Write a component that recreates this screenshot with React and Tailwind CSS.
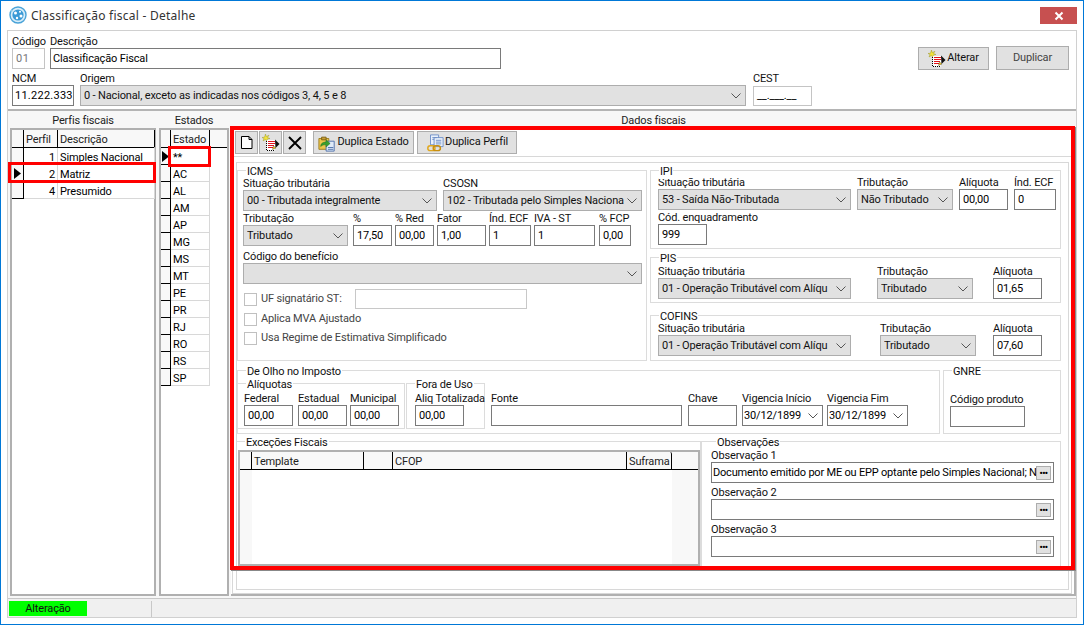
import React from 'react';

const PERFIS = [['1', 'Simples Nacional'], ['2', 'Matriz'], ['4', 'Presumido']];
const ESTADOS = ['**', 'AC', 'AL', 'AM', 'AP', 'MG', 'MS', 'MT', 'PE', 'PR', 'RJ', 'RO', 'RS', 'SP'];

function AppIcon() {
  return (
    <svg width="18" height="18" viewBox="0 0 18 18">
      <circle cx="9" cy="9" r="8" fill="#d9eefa" stroke="#4aa3d8" strokeWidth="1.4" />
      <circle cx="9" cy="9" r="5.6" fill="#3b9ad6" />
      <circle cx="6.5" cy="7" r="1.5" fill="#fff" />
      <circle cx="11" cy="5.8" r="1" fill="#fff" />
      <circle cx="12" cy="10" r="1.5" fill="#fff" />
      <circle cx="8" cy="12" r="1.2" fill="#fff" />
      <circle cx="2.5" cy="5" r="1" fill="#8fcbe9" />
    </svg>
  );
}

function NewIcon() {
  return (
    <svg width="14" height="15" viewBox="0 0 14 15">
      <path d="M1.500 1.500h7.500l3 3v9h-10.500z" fill="#fff" stroke="#000" />
      <path d="M9 1.500v3h3" fill="none" stroke="#000" />
    </svg>
  );
}

function EditIcon() {
  return (
    <svg width="18" height="18" viewBox="0 0 18 18">
      <path d="M3.500 0l.8 2.500L7 1.200 5.500 3.500 8 4.500l-2.700.5L5 7.500 3.500 5.500 1 7l1-2.500L0 3.500l2.500-.3z" fill="#f2e33c" stroke="#8f8a1c" strokeWidth=".4" />
      <path d="M5 6h8v10.500H4.500" fill="#fff" />
      <path d="M4.500 7v9.500h8" fill="none" stroke="#000" strokeDasharray="1 1" />
      <path d="M6 7.500h7M6 9.500h7M6 11.500h6M6 13.500h5" stroke="#e0141c" strokeWidth="1.200" />
      <path d="M13 5.500l4.500 4.500-4 4z" fill="#111" />
      <path d="M10.500 15.500l1-3.500 2.500 2z" fill="#f5d020" stroke="#333" strokeWidth=".4" />
    </svg>
  );
}

function DeleteIcon() {
  return (
    <svg width="16" height="16" viewBox="0 0 16 16">
      <path d="M2 2l12 12M14 2L2 14" stroke="#000" strokeWidth="1.900" fill="none" />
    </svg>
  );
}

function DupEstadoIcon() {
  return (
    <svg width="18" height="18" viewBox="0 0 20 20">
      <path d="M1 5h11v12H1z" fill="#eec64a" stroke="#9a7a1c" />
      <path d="M4 3.500h5v3H4z" fill="#c9a035" stroke="#7a5f14" />
      <path d="M9 8h9v11H9z" fill="#dfeaf8" stroke="#4a6da8" />
      <path d="M11 15h6M11 17h6" stroke="#4a6da8" />
      <path d="M3 14c0-4 3-5 6-5V6.500l4.500 4-4.500 4V12c-3 0-4 0-6 2z" fill="#3aa02e" stroke="#1e6a18" strokeWidth=".5" />
    </svg>
  );
}

function DupPerfilIcon() {
  return (
    <svg width="18" height="18" viewBox="0 0 20 20">
      <path d="M5 1h9v11H5z" fill="#eaf1fb" stroke="#6b8cc6" />
      <path d="M9 4h10v10H9z" fill="#eaf1fb" stroke="#6b8cc6" />
      <path d="M7 4h5M7 6h2M11 7h6M11 9h6M11 11h6" stroke="#6b8cc6" />
      <rect x="2" y="13" width="8" height="5.500" rx="2.700" fill="none" stroke="#e0a820" strokeWidth="1.600" />
      <rect x="8" y="13" width="8" height="5.500" rx="2.700" fill="none" stroke="#c98f10" strokeWidth="1.600" />
    </svg>
  );
}

function Chevron() {
  return (
    <svg width="10" height="6" viewBox="0 0 10 6" className="shrink-0 mr-[4px] ml-[3px]">
      <path d="M.5.500L5 5l4.500-4.500" fill="none" stroke="#555" />
    </svg>
  );
}

function Arrow({ className }) {
  return (
    <svg width="7" height="11" viewBox="0 0 7 11" className={className}>
      <path d="M0 0l7 5.500L0 11z" fill="#000" />
    </svg>
  );
}

function Label({ children, className = '' }) {
  return <div className={`h-[14px] leading-[15px] whitespace-nowrap text-[#111] ${className}`}>{children}</div>;
}

function Input({ className = '', children }) {
  return (
    <div className={`h-[21px] border border-[#7a7a7a] bg-white pl-[3px] leading-[20px] overflow-hidden whitespace-nowrap text-black ${className}`}>
      {children}
    </div>
  );
}

function Select({ className = '', children }) {
  return (
    <div className={`h-[21px] border border-[#adadad] bg-[#e1e1e1] pl-[3px] flex items-center text-[#111] ${className}`}>
      <span className="flex-1 min-w-0 overflow-hidden whitespace-nowrap leading-[20px]">{children}</span>
      <Chevron />
    </div>
  );
}

function Field({ label, className = '', children }) {
  return (
    <div className={`shrink-0 ${className}`}>
      <Label>{label}</Label>
      {children}
    </div>
  );
}

function Group({ title, className = '', legendClass = 'left-[8px]', children }) {
  return (
    <div className={`relative border border-[#dcdcdc] shrink-0 ${className}`}>
      <div className={`absolute -top-[6px] bg-white px-[1px] h-[14px] leading-[14px] whitespace-nowrap text-[#111] ${legendClass}`}>{title}</div>
      {children}
    </div>
  );
}

function ToolBtn({ className = '', children }) {
  return (
    <div className={`border border-[#adadad] bg-[#e1e1e1] flex items-center justify-center gap-[1px] shrink-0 ${className}`}>
      {children}
    </div>
  );
}

function GridHead({ className = '', children }) {
  return <div className={`h-full border-r border-black pl-[2px] leading-[19px] whitespace-nowrap overflow-hidden text-[#222] shrink-0 ${className}`}>{children}</div>;
}

function ObsRow({ label, className = '', children }) {
  return (
    <div className={className}>
      <Label>{label}</Label>
      <div className="h-[21px] border border-[#7a7a7a] bg-white pl-[1px] flex items-center">
        <span className="flex-1 min-w-0 overflow-hidden whitespace-nowrap text-black leading-[20px] tracking-[-0.2px]">{children}</span>
        <div className="w-[15px] h-[14px] mr-[2px] border border-[#adadad] bg-[#e1e1e1] flex items-center justify-center shrink-0 font-bold leading-[8px] text-[9px] tracking-[-0.5px] text-black">
          •••
        </div>
      </div>
    </div>
  );
}

function DateBox() {
  return (
    <div className="w-[81px] h-[21px] border border-[#7a7a7a] bg-white pl-[1px] flex items-center text-black">
      <span className="flex-1 leading-[20px]">30/12/1899</span><Chevron />
    </div>
  );
}

export default function App() {
  return (
    <div className="relative w-[1084px] h-[625px] border border-[#0078d7] bg-white flex flex-col overflow-hidden text-[11px] tracking-[-0.15px] [font-family:Roboto,sans-serif]">
      {/* Title bar */}
      <div className="h-[29px] shrink-0 flex items-start pl-[8px] pr-[6px] bg-white">
        <div className="mt-[5px]"><AppIcon /></div>
        <div className="ml-[4px] mt-[6px] text-[12px] tracking-[0.25px] leading-[17px] text-[#333] [font-family:'Noto_Sans',sans-serif]">Classificação fiscal - Detalhe</div>
        <div className="ml-auto mt-[6px] w-[37px] h-[17px] bg-[#c75050] flex items-center justify-center">
          <svg width="10" height="10" viewBox="0 0 10 10">
            <path d="M1.500 1.500l7 7M8.500 1.500l-7 7" stroke="#fff" strokeWidth="2" />
          </svg>
        </div>
      </div>

      {/* Client */}
      <div className="flex-1 min-h-0 mx-[6px] mb-[6px] border border-[#d0d0d0] bg-[#f0f0f0] flex flex-col">
        {/* Header form */}
        <div className="h-[80px] shrink-0 bg-white border-b-2 border-[#b4b4b4] pl-[4px] pt-[3px]">
          <div className="flex items-start h-[37px]">
            <Field label="Código" className="w-[33px]">
              <div className="h-[21px] border border-[#c4c4c4] bg-white pl-[3px] leading-[20px] text-[#777] tracking-[.5px]">01</div>
            </Field>
            <Field label="Descrição" className="ml-[5px]">
              <Input className="w-[451px]"><span className="-ml-[1px]">Classificação Fiscal</span></Input>
            </Field>
            <ToolBtn className="ml-[417px] mt-[13px] w-[71px] h-[23px] text-[#111]"><EditIcon /> Alterar</ToolBtn>
            <ToolBtn className="ml-[7px] mt-[12px] w-[73px] h-[24px] text-[#444]">Duplicar</ToolBtn>
          </div>
          <div className="flex items-start">
            <Field label="NCM">
              <Input className="w-[62px]"><span className="-ml-[1px] tracking-[.25px]">11.222.333</span></Input>
            </Field>
            <Field label="Origem" className="ml-[6px]">
              <Select className="w-[666px]">0 - Nacional, exceto as indicadas nos códigos 3, 4, 5 e 8</Select>
            </Field>
            <Field label="CEST" className="ml-[7px]">
              <div className="w-[59px] h-[20px] mt-[1px] border border-[#c4c4c4] bg-white pl-[3px] leading-[18px] text-black">__.___.__</div>
            </Field>
          </div>
        </div>

        {/* Main */}
        <div className="flex-1 min-h-0 flex pl-[2px] pb-[2px] bg-[#f7f7f7]">
          {/* Perfis */}
          <div className="w-[146px] shrink-0 flex flex-col">
            <div className="h-[17px] leading-[19px] text-center text-[#222] shrink-0">Perfis fiscais</div>
            <div className="flex-1 min-h-0 border-2 border-[#b0b0b0] bg-white">
              <div className="h-[18px] flex border-b border-black bg-[#f8f8f8]">
                <GridHead className="w-[12px]" />
                <GridHead className="w-[34px]">Perfil</GridHead>
                <GridHead className="w-[97px]">Descrição</GridHead>
              </div>
              {PERFIS.map(([n, d], i) => (
                <div key={n} className="h-[17px] flex leading-[19px] text-black">
                  <div className="w-[12px] shrink-0 bg-[#f8f8f8] border-r border-b border-black flex items-center justify-center">
                    {i === 1 && <Arrow />}
                  </div>
                  <div className="w-[34px] shrink-0 border-r border-b border-[#d8d8d8] text-right pr-[2px]">{n}</div>
                  <div className="w-[97px] shrink-0 border-r border-b border-[#d8d8d8] pl-[2px]">{d}</div>
                </div>
              ))}
            </div>
          </div>

          {/* Estados */}
          <div className="w-[70px] shrink-0 ml-[3px] flex flex-col">
            <div className="h-[17px] leading-[19px] text-center text-[#222] shrink-0">Estados</div>
            <div className="flex-1 min-h-0 border-2 border-[#b0b0b0] bg-white">
              <div className="h-[18px] flex border-b border-black bg-[#f8f8f8]">
                <GridHead className="w-[10px]" />
                <GridHead className="w-[39px]">Estado</GridHead>
              </div>
              {ESTADOS.map((uf, i) => (
                <div key={uf} className="h-[17px] flex leading-[19px] text-black">
                  <div className="w-[10px] shrink-0 bg-[#f8f8f8] border-r border-b border-black flex items-center justify-center">
                    {i === 0 && <Arrow />}
                  </div>
                  <div className="w-[39px] shrink-0 border-r border-b border-[#d8d8d8] pl-[2px]">{uf}</div>
                </div>
              ))}
            </div>
          </div>

          {/* Dados fiscais */}
          <div className="w-[845px] shrink-0 ml-[2px] flex flex-col">
            <div className="h-[17px] leading-[19px] text-center text-[#222] shrink-0">Dados fiscais</div>
            <div className="flex-1 min-h-0 bg-white border-r-2 border-b-2 border-[#b0b0b0]">
              <div className="h-[28px] pt-[3px] flex pl-[4px] text-[#111]">
                <ToolBtn className="w-[23px] h-[23px]"><NewIcon /></ToolBtn>
                <ToolBtn className="w-[23px] h-[23px] ml-[1px]"><EditIcon /></ToolBtn>
                <ToolBtn className="w-[23px] h-[23px] ml-[1px]"><DeleteIcon /></ToolBtn>
                <ToolBtn className="w-[101px] h-[23px] ml-[7px]"><DupEstadoIcon /> Duplica Estado</ToolBtn>
                <ToolBtn className="w-[100px] h-[23px] ml-[3px]"><DupPerfilIcon /> Duplica Perfil</ToolBtn>
              </div>
              <div className="w-[840px] h-[438px] ml-[1px] border border-[#d8d8d8] pl-[3px] pt-[5px]">
                <div className="w-[833px] h-[428px] border border-[#d8d8d8]">
                  {/* ICMS / IPI */}
                  <div className="flex mt-[7px]">
                    <Group title="ICMS" className="w-[410px] h-[191px] pl-[5px] pt-[5px]">
                      <div className="flex">
                        <Field label="Situação tributária">
                          <Select className="w-[194px]">00 - Tributada integralmente</Select>
                        </Field>
                        <Field label="CSOSN" className="ml-[6px]">
                          <Select className="w-[199px]">102 - Tributada pelo Simples Naciona</Select>
                        </Field>
                      </div>
                      <div className="flex">
                        <Field label="Tributação"><Select className="w-[105px]">Tributado</Select></Field>
                        <Field label="%" className="ml-[5px]"><Input className="w-[39px]">17,50</Input></Field>
                        <Field label="% Red" className="ml-[3px]"><Input className="w-[39px]">00,00</Input></Field>
                        <Field label="Fator" className="ml-[3px]"><Input className="w-[49px]">1,00</Input></Field>
                        <Field label="Índ. ECF" className="ml-[3px]"><Input className="w-[42px]">1</Input></Field>
                        <Field label="IVA - ST" className="ml-[3px]"><Input className="w-[61px]">1</Input></Field>
                        <Field label="% FCP" className="ml-[4px]"><Input className="w-[32px]">0,00</Input></Field>
                      </div>
                      <Field label="Código do benefício" className="mt-[3px]">
                        <Select className="w-[399px]" />
                      </Field>
                      <div className="flex items-center mt-[5px] h-[20px] pl-[1px] text-[#444]">
                        <div className="w-[13px] h-[13px] border border-[#c0c0c0] bg-white shrink-0" />
                        <span className="ml-[4px] w-[94px]">UF signatário ST:</span>
                        <div className="w-[172px] h-[20px] border border-[#c8c8c8] bg-white" />
                      </div>
                      <div className="flex items-center mt-[3px] h-[15px] pl-[1px] text-[#444]">
                        <div className="w-[13px] h-[13px] border border-[#c0c0c0] bg-white shrink-0" />
                        <span className="ml-[4px]">Aplica MVA Ajustado</span>
                      </div>
                      <div className="flex items-center mt-[4px] h-[15px] pl-[1px] text-[#444]">
                        <div className="w-[13px] h-[13px] border border-[#c0c0c0] bg-white shrink-0" />
                        <span className="ml-[4px]">Usa Regime de Estimativa Simplificado</span>
                      </div>
                    </Group>

                    <div className="ml-[3px] w-[411px] shrink-0">
                      <Group title="IPI" className="h-[79px] pl-[7px] pt-[4px]">
                        <div className="flex">
                          <Field label="Situação tributária"><Select className="w-[193px]">53 - Saída Não-Tributada</Select></Field>
                          <Field label="Tributação" className="ml-[6px]"><Select className="w-[96px]">Não Tributado</Select></Field>
                          <Field label="Alíquota" className="ml-[6px]"><Input className="w-[49px]">00,00</Input></Field>
                          <Field label="Índ. ECF" className="ml-[6px]"><Input className="w-[42px]">0</Input></Field>
                        </div>
                        <Field label="Cód. enquadramento">
                          <Input className="w-[49px]">999</Input>
                        </Field>
                      </Group>
                      <Group title="PIS" className="h-[46px] mt-[8px] pl-[7px] pt-[6px]">
                        <div className="flex">
                          <Field label="Situação tributária"><Select className="w-[193px]">01 - Operação Tributável com Alíqu</Select></Field>
                          <Field label="Tributação" className="ml-[26px]"><Select className="w-[96px]">Tributado</Select></Field>
                          <Field label="Alíquota" className="ml-[20px]"><Input className="w-[49px]">01,65</Input></Field>
                        </div>
                      </Group>
                      <Group title="COFINS" className="h-[46px] mt-[12px] pl-[7px] pt-[5px]">
                        <div className="flex">
                          <Field label="Situação tributária"><Select className="w-[193px]">01 - Operação Tributável com Alíqu</Select></Field>
                          <Field label="Tributação" className="ml-[29px]"><Select className="w-[96px]">Tributado</Select></Field>
                          <Field label="Alíquota" className="ml-[17px]"><Input className="w-[49px]">07,60</Input></Field>
                        </div>
                      </Group>
                    </div>
                  </div>

                  {/* De Olho / GNRE */}
                  <div className="flex mt-[9px]">
                    <Group title="De Olho no Imposto" className="w-[703px] h-[64px] pt-[12px]">
                      <div className="flex">
                        <Group title="Alíquotas" className="w-[168px] h-[46px] -ml-[1px] pl-[6px] pt-[7px]">
                          <div className="flex">
                            <Field label="Federal"><Input className="w-[49px]">00,00</Input></Field>
                            <Field label="Estadual" className="ml-[5px]"><Input className="w-[49px]">00,00</Input></Field>
                            <Field label="Municipal" className="ml-[3px]"><Input className="w-[49px]">00,00</Input></Field>
                          </div>
                        </Group>
                        <Group title="Fora de Uso" className="w-[79px] h-[46px] ml-[1px] pl-[8px] pt-[7px]">
                          <Field label="Aliq Totalizada"><Input className="w-[49px]">00,00</Input></Field>
                        </Group>
                        <div className="flex mt-[8px]">
                          <Field label="Fonte" className="ml-[6px]"><Input className="w-[191px]" /></Field>
                          <Field label="Chave" className="ml-[6px]"><Input className="w-[49px]" /></Field>
                          <Field label="Vigencia Início" className="ml-[5px]"><DateBox /></Field>
                          <Field label="Vigencia Fim" className="ml-[4px]"><DateBox /></Field>
                        </div>
                      </div>
                    </Group>
                    <Group title="GNRE" className="w-[118px] h-[64px] ml-[3px] pl-[6px] pt-[21px]">
                      <Field label="Código produto"><Input className="w-[75px]" /></Field>
                    </Group>
                  </div>

                  {/* Exceções / Observações */}
                  <div className="flex mt-[7px]">
                    <Group title="Exceções Fiscais" className="w-[464px] h-[125px] pt-[8px] border-b-0 border-l-0">
                      <div className="w-[462px] h-[116px] ml-[1px] border-2 border-[#b0b0b0] bg-[#f8f8f8] flex flex-col">
                        <div className="h-[18px] flex border-b border-black shrink-0">
                          <GridHead className="w-[12px]" />
                          <GridHead className="w-[112px]">Template</GridHead>
                          <GridHead className="w-[29px]" />
                          <GridHead className="w-[234px]">CFOP</GridHead>
                          <GridHead className="w-[45px] rounded-tr-[2px]">Suframa</GridHead>
                        </div>
                        <div className="flex-1 min-h-0 flex">
                          <div className="w-[12px] bg-[#f8f8f8] shrink-0" />
                          <div className="w-[420px] bg-white shrink-0" />
                        </div>
                      </div>
                    </Group>
                    <Group title="Observações" className="w-[360px] h-[125px] pl-[9px] pt-[6px] border-b-0" legendClass="left-[14px]">
                      <ObsRow label="Observação 1" className="w-[343px]">Documento emitido por ME ou EPP optante pelo Simples Nacional; N</ObsRow>
                      <ObsRow label="Observação 2" className="w-[343px] mt-[2px]" />
                      <ObsRow label="Observação 3" className="w-[343px] mt-[2px]" />
                    </Group>
                  </div>
                </div>
              </div>
            </div>
          </div>
        </div>

        {/* Status bar */}
        <div className="h-[19px] shrink-0 bg-[#f0f0f0] flex items-start pt-[2px] pl-[1px] border-t border-[#c8c8c8]">
          <div className="w-[78px] h-[15px] bg-[#00ff00] text-center leading-[16px] text-[#111]">Alteração</div>
          <div className="w-[65px] h-[16px] border-r border-[#c8c8c8]" />
        </div>
      </div>

      {/* Red highlights drawn over the screen */}
      <div className="absolute left-[7px] top-[161px] w-[148px] h-[21px] border-[3px] border-[#ff0000]" />
      <div className="absolute left-[167px] top-[145px] w-[43px] h-[21px] border-[3px] border-[#ff0000]" />
      <div className="absolute left-[229px] top-[125px] w-[845px] h-[444px] border-4 border-[#ff0000] shadow-[1px_1px_0_#888]" />
    </div>
  );
}
